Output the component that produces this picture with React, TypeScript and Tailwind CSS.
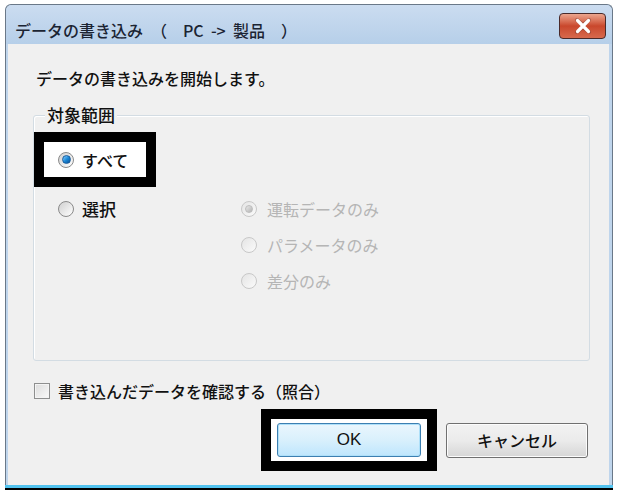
import React from "react";

function Radio({ checked = false, disabled = false }: { checked?: boolean; disabled?: boolean }) {
  return (
    <span
      className={
        "flex w-[16px] h-[16px] shrink-0 items-center justify-center rounded-full border " +
        (disabled
          ? "border-[#c8c8c8] bg-gradient-to-br from-[#e4e4e4] to-[#fbfbfb]"
          : "border-[#8a8a8a] bg-gradient-to-br from-[#d0d0d0] to-[#ffffff]")
      }
    >
      {checked && !disabled && (
        <span className="w-[9px] h-[9px] rounded-full bg-gradient-to-br from-[#7fd0ff] via-[#1c8ad8] to-[#0a4f96] border border-[#1a5c9c]" />
      )}
      {checked && disabled && (
        <span className="w-[8px] h-[8px] rounded-full bg-gradient-to-br from-[#e8e8e8] to-[#b4b4b4] border border-[#bdbdbd]" />
      )}
    </span>
  );
}

export default function App() {
  return (
    <div className="w-[620px] h-[496px] bg-white pl-[5px] pt-[4px] font-['Noto_Sans_CJK_JP',sans-serif] font-medium text-[#111]">
      <div className="w-[608px] flex flex-col rounded-t-[6px] border-x border-t border-[#6a7888] bg-[#bfd5ec]">
        {/* title bar */}
        <div className="h-[39px] flex items-start bg-gradient-to-b from-[#cbdcf0] to-[#b6cfe9] rounded-t-[6px]">
          <div className="flex-1 pl-[9px] pt-[13px] text-[16px] leading-[24px] text-[#1b2433] whitespace-pre">
            {"データの書き込み　（　PC\u00a0\u00a0->\u00a0\u00a0製品　）"}
          </div>
          <div className="mt-[8px] mr-[6px] w-[47px] h-[26px] rounded-[4px] border border-[#4a2a2a] bg-gradient-to-b from-[#eba58e] via-[#c9472c] to-[#d7694d] flex items-center justify-center">
            <svg width="18" height="16" viewBox="0 0 18 16">
              <path d="M3 2 L9 7 L15 2 M3 14 L9 9 L15 14" fill="none" stroke="#5a2a2a" strokeWidth="4" strokeLinecap="round" strokeLinejoin="round" opacity="0.35" />
              <path d="M3.5 2.5 L14.5 13.5 M14.5 2.5 L3.5 13.5" stroke="#ffffff" strokeWidth="3.2" strokeLinecap="round" />
            </svg>
          </div>
        </div>
        {/* content */}
        <div className="ml-[2px] mr-[3px] h-[441px] bg-[#f0f0f0] pl-[25px] pr-[21px] flex flex-col">
          <div className="mt-[22px] pl-[3px] h-[24px] leading-[24px] text-[16px]">
            データの書き込みを開始します。
          </div>
          {/* group box */}
          <div className="relative mt-[25px] h-[246px] w-[557px] rounded-[3px] border border-[#d3dce3] shadow-[inset_1px_1px_0_#ffffff]">
            <span className="absolute left-[11px] top-[-13px] px-[2px] bg-[#f0f0f0] text-[17px] leading-[24px]">
              対象範囲
            </span>
            <div className="mt-[16px] w-[122px] h-[55px] border-[10px] border-black bg-white flex items-center pl-[14px] gap-[8px]">
              <Radio checked />
              <span className="text-[16px] leading-[24px]">すべて</span>
            </div>
            <div className="mt-[10px] flex">
              <div className="w-[207px] pl-[24px]">
                <div className="h-[24px] flex items-center gap-[8px]">
                  <Radio />
                  <span className="text-[17px] leading-[24px]">選択</span>
                </div>
              </div>
              <div className="flex flex-col gap-[12px] text-[#b5b5b5] text-[16px] font-normal">
                <div className="h-[24px] flex items-center gap-[10px]">
                  <Radio checked disabled />
                  <span>運転データのみ</span>
                </div>
                <div className="h-[24px] flex items-center gap-[10px]">
                  <Radio disabled />
                  <span>パラメータのみ</span>
                </div>
                <div className="h-[24px] flex items-center gap-[10px]">
                  <Radio disabled />
                  <span>差分のみ</span>
                </div>
              </div>
            </div>
          </div>
          {/* checkbox */}
          <div className="mt-[21px] h-[18px] flex items-center gap-[8px] ml-[1px]">
            <span className="w-[16px] h-[16px] border border-[#8e8f8f] bg-gradient-to-br from-[#dcdcdc] to-[#fafafa] shadow-[inset_0_0_0_1px_#f4f4f4]" />
            <span className="text-[16px] leading-[18px]">書き込んだデータを確認する（照合）</span>
          </div>
          {/* buttons */}
          <div className="mt-[9px] flex items-center justify-end gap-[9px]">
            <div className="border-[10px] border-black bg-white px-[6px] py-[4px]">
              <button className="w-[144px] h-[34px] rounded-[3px] border border-[#3c7fb1] bg-gradient-to-b from-[#eaf6fd] via-[#d9f0fc] to-[#bee6fd] shadow-[inset_0_0_0_1px_#aee0f9] text-[17px] font-['Liberation_Sans',sans-serif] font-normal text-[#111]">
                OK
              </button>
            </div>
            <button className="w-[142px] h-[35px] rounded-[3px] border border-[#707070] bg-gradient-to-b from-[#f2f2f2] via-[#ebebeb] to-[#d6d6d6] shadow-[inset_0_0_0_1px_#fcfcfc] text-[16px] text-[#111]">
              キャンセル
            </button>
          </div>
        </div>
        <div className="h-[3px] ml-[-1px] mr-[-1px] bg-[#52c3ef]" />
        <div className="h-[2px] ml-[-1px] mr-[-1px] bg-black" />
      </div>
    </div>
  );
}
